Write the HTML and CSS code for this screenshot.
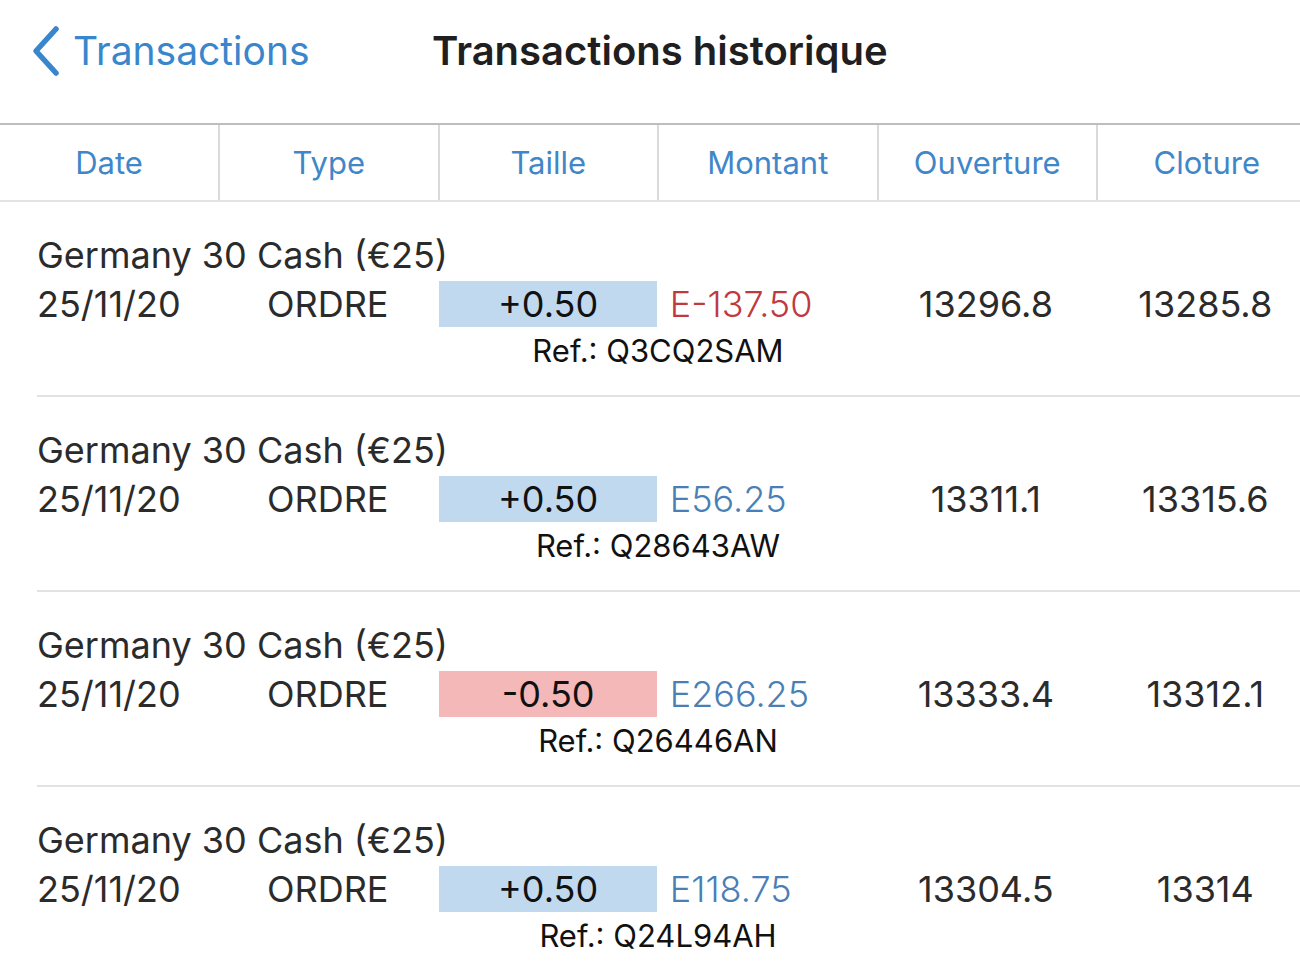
FILE: index.html
```html
<!DOCTYPE html>
<html lang="fr">
<head>
<meta charset="utf-8">
<title>Transactions historique</title>
<link rel="stylesheet" href="styles.css">
</head>
<body>
<div class="page">
  <header class="nav">
    <a class="back" href="#">
      <svg class="chev" width="30" height="52" viewBox="0 0 30 52"><path d="M25 4 L5 26 L25 48" fill="none" stroke="#3a86cc" stroke-width="5.5" stroke-linecap="round" stroke-linejoin="round"/></svg>
      <span>Transactions</span>
    </a>
    <h1 class="title">Transactions historique</h1>
  </header>
  <div class="thead">
    <div class="th">Date</div>
    <div class="th">Type</div>
    <div class="th">Taille</div>
    <div class="th">Montant</div>
    <div class="th">Ouverture</div>
    <div class="th">Cloture</div>
  </div>
  <div class="rows">
    <div class="row">
      <div class="name">Germany 30 Cash (€25)</div>
      <div class="cells">
        <div class="c date">25/11/20</div>
        <div class="c type">ORDRE</div>
        <div class="c size buy">+0.50</div>
        <div class="c amt neg">E-137.50</div>
        <div class="c num">13296.8</div>
        <div class="c num">13285.8</div>
      </div>
      <div class="ref">Ref.: Q3CQ2SAM</div>
    </div>
    <div class="row">
      <div class="name">Germany 30 Cash (€25)</div>
      <div class="cells">
        <div class="c date">25/11/20</div>
        <div class="c type">ORDRE</div>
        <div class="c size buy">+0.50</div>
        <div class="c amt pos">E56.25</div>
        <div class="c num">13311.1</div>
        <div class="c num">13315.6</div>
      </div>
      <div class="ref">Ref.: Q28643AW</div>
    </div>
    <div class="row">
      <div class="name">Germany 30 Cash (€25)</div>
      <div class="cells">
        <div class="c date">25/11/20</div>
        <div class="c type">ORDRE</div>
        <div class="c size sell">-0.50</div>
        <div class="c amt pos">E266.25</div>
        <div class="c num">13333.4</div>
        <div class="c num">13312.1</div>
      </div>
      <div class="ref">Ref.: Q26446AN</div>
    </div>
    <div class="row">
      <div class="name">Germany 30 Cash (€25)</div>
      <div class="cells">
        <div class="c date">25/11/20</div>
        <div class="c type">ORDRE</div>
        <div class="c size buy">+0.50</div>
        <div class="c amt pos">E118.75</div>
        <div class="c num">13304.5</div>
        <div class="c num">13314</div>
      </div>
      <div class="ref">Ref.: Q24L94AH</div>
    </div>
  </div>
</div>
</body>
</html>
```
FILE: styles.css
```css
html, body {
  margin: 0;
  padding: 0;
  background: #ffffff;
  overflow: hidden;
}
body {
  font-family: Inter, Roboto, "Liberation Sans", Arial, sans-serif;
  color: #222222;
}
.page {
  width: 1300px;
  height: 975px;
  overflow: hidden;
}
.nav {
  height: 123px;
  display: flex;
  align-items: center;
  border-bottom: 2px solid #bdbdbd;
}
.back {
  display: flex;
  align-items: center;
  text-decoration: none;
  color: #3a86cc;
  font-size: 39px;
  margin-left: 31px;
  width: 401px;
  margin-top: -22px;
}
.chev {
  margin-right: 12px;
}
.title {
  margin: -22px 0 0 0;
  font-size: 40px;
  font-weight: 600;
  color: #1f1f22;
}
.thead {
  display: grid;
  grid-template-columns: 218px repeat(5, 219.5px);
  height: 75px;
  border-bottom: 2px solid #e3e3e3;
}
.th {
  display: flex;
  align-items: center;
  justify-content: center;
  font-size: 31px;
  color: #3f87c9;
  border-left: 2px solid #dadada;
}
.th:first-child {
  border-left: none;
}
.row {
  height: 193px;
  margin-left: 37px;
  border-bottom: 2px solid #e2e2e2;
  box-sizing: content-box;
  display: flex;
  flex-direction: column;
}
.name {
  font-size: 36px;
  margin-top: 32px;
  line-height: 42px;
  color: #2b2b2b;
}
.cells {
  display: grid;
  grid-template-columns: 181px 219.4px 219.4px 219.4px 219.4px 219.4px;
  height: 46px;
  margin-top: 5px;
  font-size: 36px;
  color: #2b2b2b;
}
.c {
  display: flex;
  align-items: center;
  line-height: 46px;
}
.type, .num {
  justify-content: center;
}
.size {
  justify-content: center;
  color: #111111;
  margin-left: 2px;
}
.buy {
  background: #c1d9ef;
}
.sell {
  background: #f4b8b8;
}
.amt {
  padding-left: 13px;
  font-weight: 300;
}
.neg {
  color: #c0393f;
}
.pos {
  color: #4a7fb6;
}
.ref {
  margin-left: 402px;
  width: 438px;
  text-align: center;
  font-size: 31px;
  line-height: 48px;
  color: #111111;
}
```
